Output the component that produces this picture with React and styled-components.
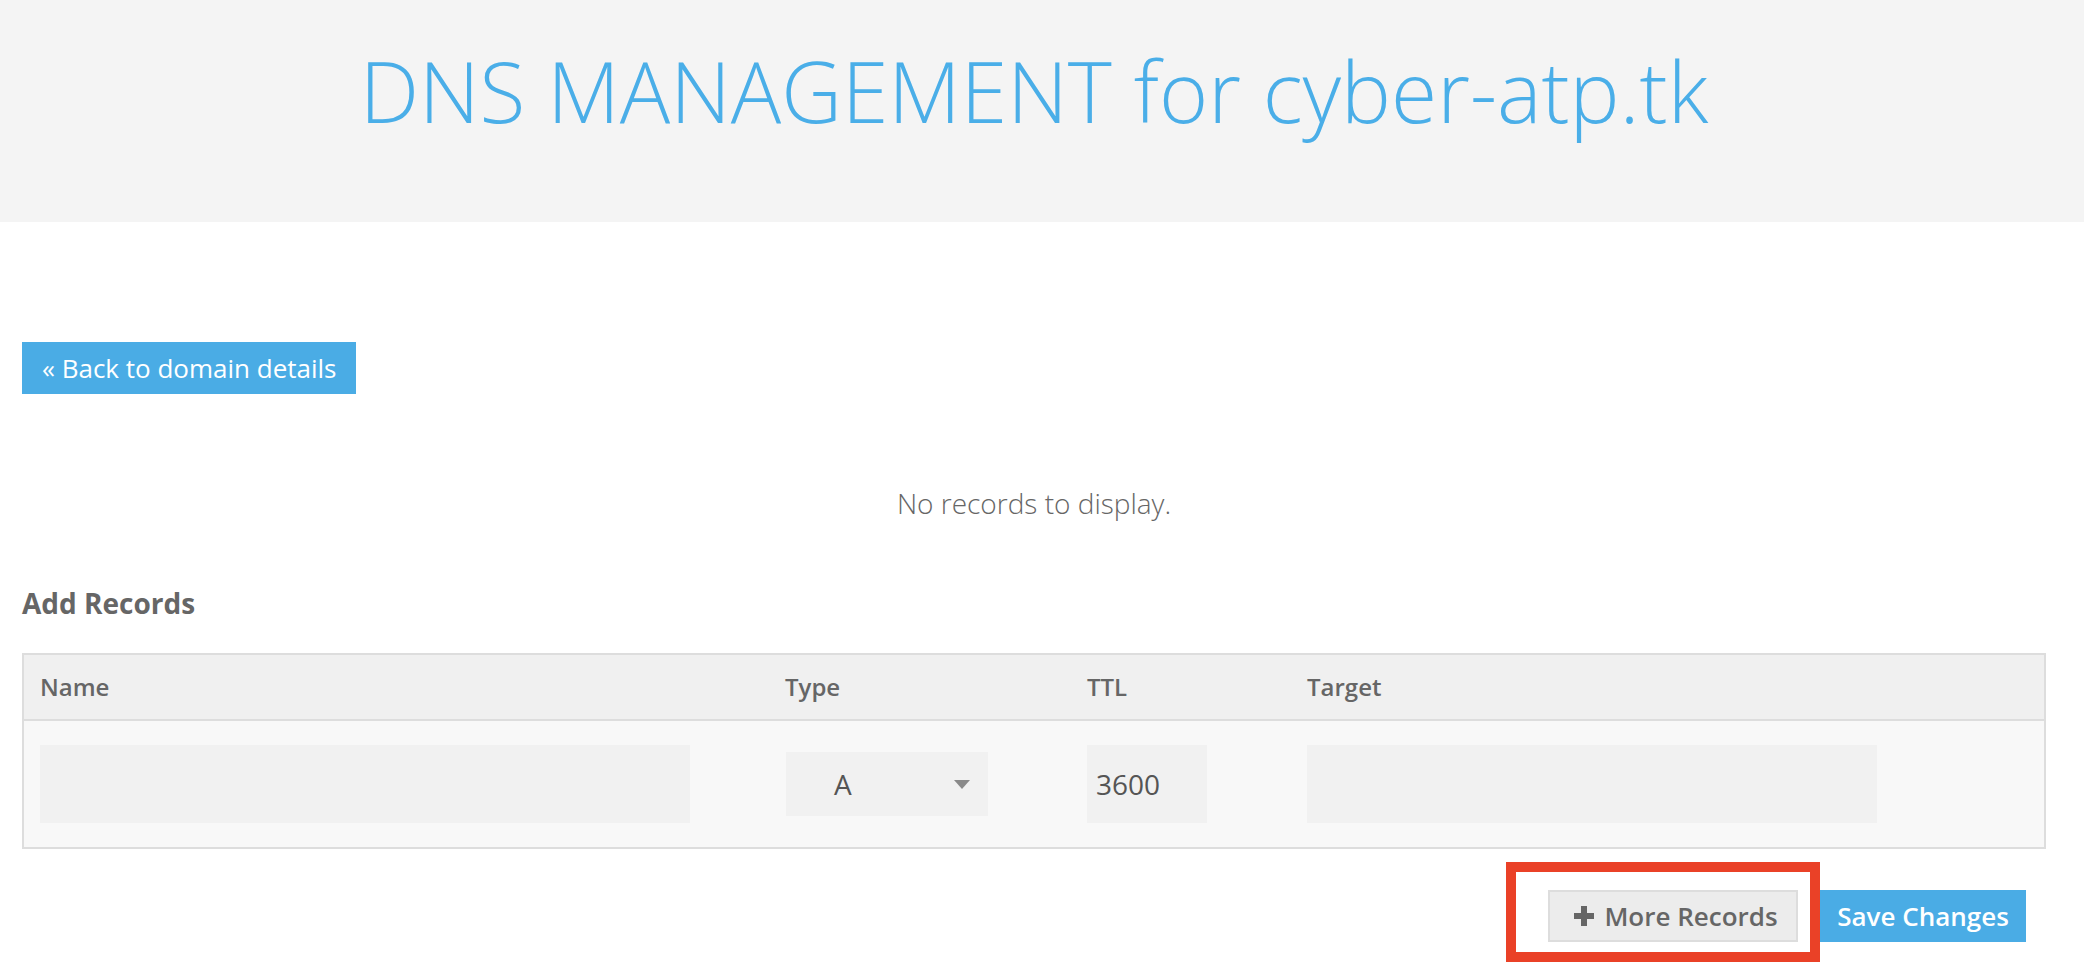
import React from 'react';
import styled, { createGlobalStyle } from 'styled-components';

const GlobalStyle = createGlobalStyle`
  html, body {
    margin: 0;
    padding: 0;
    background: #ffffff;
    font-family: "Open Sans", "Liberation Sans", sans-serif;
    color: #666666;
  }
  * {
    box-sizing: border-box;
  }
`;

const columns = [
  { key: 'name', label: 'Name' },
  { key: 'type', label: 'Type' },
  { key: 'ttl', label: 'TTL' },
  { key: 'target', label: 'Target' },
];

function PlusIcon() {
  return (
    <svg width="20" height="20" viewBox="0 0 20 20" aria-hidden="true">
      <rect x="7" y="0" width="6" height="20" fill="currentColor" />
      <rect x="0" y="7" width="20" height="6" fill="currentColor" />
    </svg>
  );
}

export default function App() {
  return (
    <>
      <GlobalStyle />
      <Header>
        <Title>DNS MANAGEMENT for cyber-atp.tk</Title>
      </Header>

      <Main>
        <BackButton>« Back to domain details</BackButton>

        <EmptyNote>No records to display.</EmptyNote>

        <SectionTitle>Add Records</SectionTitle>

        <RecordsTable>
          <HeadRow>
            {columns.map((c) => (
              <HeadCell key={c.key}>{c.label}</HeadCell>
            ))}
          </HeadRow>
          <BodyRow>
            <Cell>
              <Field $width={650} />
            </Cell>
            <Cell>
              <Select>
                <span>A</span>
                <Caret />
              </Select>
            </Cell>
            <Cell>
              <Field $width={120} defaultValue="3600" />
            </Cell>
            <Cell>
              <Field $width={570} />
            </Cell>
          </BodyRow>
        </RecordsTable>

        <Actions>
          <Highlight>
            <GhostButton>
              <PlusIcon />
              More Records
            </GhostButton>
          </Highlight>
          <PrimaryButton>Save Changes</PrimaryButton>
        </Actions>
      </Main>
    </>
  );
}

const Header = styled.header`
  background: #f4f4f4;
  height: 222px;
  padding: 33px 38px 0 22px;
  text-align: center;
`;

const Title = styled.h1`
  margin: 0;
  font-size: 84px;
  font-weight: 300;
  line-height: normal;
  color: #4aaee8;
`;

const Main = styled.main`
  display: flex;
  flex-direction: column;
  align-items: flex-start;
  padding: 120px 38px 40px 22px;
`;

const BackButton = styled.button`
  height: 52px;
  padding: 0 20px;
  border: none;
  background: #4aace5;
  color: #ffffff;
  font-family: inherit;
  font-size: 26px;
  line-height: 52px;
  cursor: pointer;
`;

const EmptyNote = styled.p`
  align-self: stretch;
  margin: 89px 0 0;
  text-align: center;
  font-size: 28px;
  font-weight: 300;
  line-height: 40px;
  color: #666666;
`;

const SectionTitle = styled.h3`
  margin: 62px 0 0;
  font-size: 28px;
  font-weight: 700;
  line-height: 36px;
  color: #666666;
`;

const RecordsTable = styled.div`
  align-self: stretch;
  margin-top: 32px;
  border: 2px solid #dddddd;
`;

const Row = styled.div`
  display: grid;
  grid-template-columns: 745px 302px 220px 1fr;
  align-items: center;
`;

const HeadRow = styled(Row)`
  height: 66px;
  background: #f0f0f0;
  border-bottom: 2px solid #dddddd;
`;

const BodyRow = styled(Row)`
  height: 126px;
  background: #f8f8f8;
`;

const HeadCell = styled.div`
  padding-left: 16px;
  font-size: 24px;
  font-weight: 600;
  line-height: 64px;
  color: #666666;
`;

const Cell = styled.div`
  padding-left: 16px;
  display: flex;
  align-items: center;
`;

const Field = styled.input.attrs({ type: 'text' })`
  width: ${(p) => p.$width}px;
  height: 78px;
  padding: 0 9px;
  border: none;
  outline: none;
  background: #f1f1f1;
  font-family: inherit;
  font-size: 28px;
  color: #555555;
`;

const Select = styled.div`
  width: 202px;
  height: 64px;
  margin-left: 1px;
  padding: 0 18px 0 48px;
  display: flex;
  align-items: center;
  justify-content: space-between;
  background: #f1f1f1;
  font-size: 28px;
  color: #555555;
`;

const Caret = styled.span`
  width: 0;
  height: 0;
  border-left: 8px solid transparent;
  border-right: 8px solid transparent;
  border-top: 9px solid #8a8a8a;
`;

const Actions = styled.div`
  align-self: stretch;
  display: flex;
  justify-content: flex-end;
  align-items: center;
  gap: 22px;
  margin-top: 41px;
  padding-right: 20px;
`;

const Highlight = styled.div`
  position: relative;
  display: flex;

  &::after {
    content: '';
    position: absolute;
    top: -28px;
    left: -42px;
    right: -22px;
    bottom: -20px;
    border: 10px solid #ea4127;
    pointer-events: none;
  }
`;

const BaseButton = styled.button`
  height: 52px;
  display: inline-flex;
  align-items: center;
  justify-content: center;
  gap: 10px;
  font-family: inherit;
  font-size: 26px;
  font-weight: 600;
  cursor: pointer;
`;

const GhostButton = styled(BaseButton)`
  width: 250px;
  padding: 0 18px 0 24px;
  border: 2px solid #dddddd;
  background: #ececec;
  color: #666666;
`;

const PrimaryButton = styled(BaseButton)`
  width: 206px;
  padding: 0;
  border: none;
  background: #4aace5;
  color: #ffffff;
`;
